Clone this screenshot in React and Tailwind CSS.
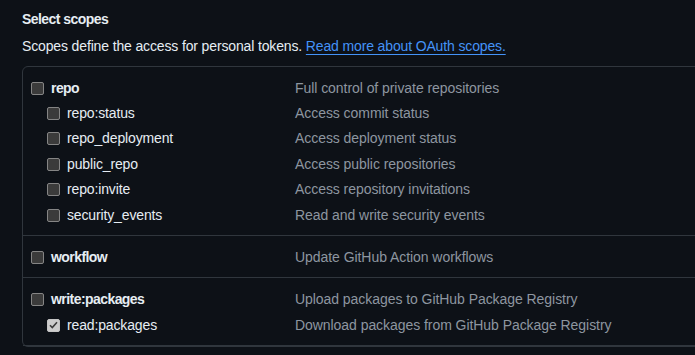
import React from 'react';

const groups = [
  [
    { name: 'repo', desc: 'Full control of private repositories', parent: true },
    { name: 'repo:status', desc: 'Access commit status' },
    { name: 'repo_deployment', desc: 'Access deployment status' },
    { name: 'public_repo', desc: 'Access public repositories' },
    { name: 'repo:invite', desc: 'Access repository invitations' },
    { name: 'security_events', desc: 'Read and write security events' },
  ],
  [{ name: 'workflow', desc: 'Update GitHub Action workflows', parent: true }],
  [
    { name: 'write:packages', desc: 'Upload packages to GitHub Package Registry', parent: true },
    { name: 'read:packages', desc: 'Download packages from GitHub Package Registry', checked: true },
  ],
];

const Checkbox = ({ checked }) =>
  checked ? (
    <span className="flex h-[13px] w-[13px] shrink-0 items-center justify-center rounded-[2px] border border-[#c4c4c4] bg-[#cccccc]">
      <svg width="9" height="8" viewBox="0 0 9 8" fill="none">
        <path d="M1 4.2 3.3 6.5 8 1.3" stroke="#3a3a3a" strokeWidth="1.6" />
      </svg>
    </span>
  ) : (
    <span className="h-[13px] w-[13px] shrink-0 rounded-[2px] border border-[#858585] bg-[#3b3b3b]" />
  );

const ScopeRow = ({ scope }) => (
  <div className="flex h-[25.4px] items-center">
    <div
      className={`flex w-[264px] shrink-0 items-center gap-[7px] ${scope.parent ? '' : 'pl-[16px]'}`}
    >
      <Checkbox checked={scope.checked} />
      <span
        className={
          scope.parent
            ? 'font-bold tracking-[-0.04em] text-[#e6edf3]'
            : 'tracking-[-0.01em] text-[#e6edf3]'
        }
      >
        {scope.name}
      </span>
    </div>
    <span className="whitespace-nowrap tracking-[-0.004em] text-[#8d96a0]">{scope.desc}</span>
  </div>
);

const App = () => {
  return (
    <div
      className="h-[355px] w-[695px] overflow-hidden bg-[#0d1117] pl-[22px] pt-[9px] text-[14px] text-[#e6edf3]"
      style={{ fontFamily: '"Liberation Sans", Arial, sans-serif' }}
    >
      <h3 className="font-bold leading-[21px] tracking-[-0.04em]">Select scopes</h3>
      <p className="mt-[6px] whitespace-nowrap leading-[21px] tracking-[-0.01em]">
        Scopes define the access for personal tokens.{' '}
        <a href="#" className="text-[#4493f8] underline underline-offset-[3px]">
          Read more about OAuth scopes.
        </a>
      </p>

      <div className="mt-[8.5px] w-[720px] rounded-[6px] border border-[#30363d]">
        {groups.map((group, index) => (
          <div key={index} className="border-b border-[#30363d] pb-[7px] pl-[8px] pt-[9px]">
            {group.map((scope) => (
              <ScopeRow key={scope.name} scope={scope} />
            ))}
          </div>
        ))}
      </div>
    </div>
  );
};

export default App;
